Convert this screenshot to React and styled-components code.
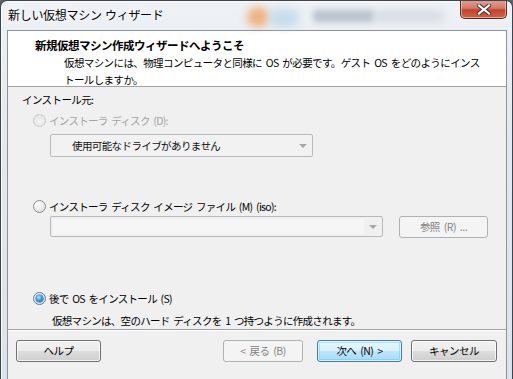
import React, { useState } from 'react';
import styled, { createGlobalStyle, css } from 'styled-components';

const GlobalStyle = createGlobalStyle`
  html, body {
    margin: 0;
    padding: 0;
    background: #5a6470;
  }
  body {
    font-family: "Noto Sans CJK JP", "Noto Sans", sans-serif;
    font-size: 10.5px;
    word-spacing: 2px;
    color: #000;
  }
`;

const Window = styled.div`
  position: relative;
  width: 513px;
  height: 379px;
  box-sizing: border-box;
  display: flex;
  flex-direction: column;
  overflow: hidden;
  border: 1px solid #3e444c;
  border-bottom: none;
  border-radius: 7px 7px 0 0;
  background: linear-gradient(180deg, #eef1f5 0%, #e3e8ee 40%, #dde3ea 100%);
  box-shadow: inset 1px 1px 0 rgba(255, 255, 255, 0.85);
`;

const Blur = styled.span`
  position: absolute;
  top: ${(p) => p.top}px;
  left: ${(p) => p.left}px;
  width: ${(p) => p.w}px;
  height: ${(p) => p.h}px;
  border-radius: ${(p) => p.r || 8}px;
  background: ${(p) => p.color};
  filter: blur(${(p) => p.blur || 3}px);
  opacity: ${(p) => p.op || 0.7};
  pointer-events: none;
`;

const TitleBar = styled.div`
  position: relative;
  height: 29px;
  display: flex;
  align-items: flex-start;
  justify-content: space-between;
  padding-left: 7px;
  flex-shrink: 0;
`;

const Title = styled.div`
  position: relative;
  margin-top: 5px;
  font-size: 12px;
  line-height: 17px;
  word-spacing: 1px;
  color: #000;
  letter-spacing: -0.3px;
  text-shadow: 0 0 6px #fff, 0 0 10px #fff;
`;

const CloseButton = styled.button`
  position: relative;
  width: 47px;
  height: 19px;
  margin: -1px 5px 0 0;
  padding: 0;
  border: 1px solid #5c2a22;
  border-top: none;
  border-radius: 0 0 5px 5px;
  background: linear-gradient(180deg, #e0a196 0%, #d27b6a 45%, #c4422c 55%, #d0624c 100%);
  box-shadow: inset 0 0 0 1px rgba(255, 220, 210, 0.55);
  display: flex;
  align-items: center;
  justify-content: center;
  cursor: pointer;
`;

const Client = styled.div`
  flex: 1;
  margin: 0 5px 0 6px;
  border: 1px solid #8a929b;
  border-bottom: none;
  background: #f0f0f0;
  display: flex;
  flex-direction: column;
`;

const Header = styled.div`
  height: 56px;
  box-sizing: border-box;
  background: #fff;
  border-bottom: 1px solid #a0a0a0;
  padding: 6px 0 0 27px;
  flex-shrink: 0;
`;

const HeaderTitle = styled.div`
  font-weight: bold;
  font-size: 11.5px;
  line-height: 17px;
  letter-spacing: -0.5px;
`;

const HeaderText = styled.div`
  padding-left: 29px;
  line-height: 17px;
  letter-spacing: -0.6px;
`;

const Line = styled.span`
  display: block;
  white-space: nowrap;
`;

const Body = styled.div`
  height: 243px;
  box-sizing: border-box;
  padding: 4px 0 0 14px;
  display: flex;
  flex-direction: column;
  align-items: flex-start;
  border-bottom: 1px solid #a0a0a0;
  flex-shrink: 0;
`;

const Label = styled.div`
  line-height: 17px;
  letter-spacing: -0.6px;
`;

const RadioRow = styled.label`
  display: flex;
  align-items: center;
  gap: 3px;
  margin-top: ${(p) => p.mt}px;
  margin-left: 11px;
  line-height: 17px;
  letter-spacing: -0.7px;
  white-space: pre;
  color: ${(p) => (p.disabled ? '#a3a3a3' : '#000')};
  cursor: default;
`;

const RadioCircle = styled.span`
  position: relative;
  width: 13px;
  height: 13px;
  box-sizing: border-box;
  border-radius: 50%;
  border: 1px solid ${(p) => (p.disabled ? '#c8c8c8' : '#8b8e92')};
  background: ${(p) =>
    p.disabled
      ? 'radial-gradient(circle at 50% 60%, #f4f4f4 0%, #e6e6e6 70%)'
      : 'radial-gradient(circle at 35% 30%, #ffffff 0%, #e9eaeb 55%, #cfd1d3 100%)'};
  flex-shrink: 0;
  ${(p) =>
    p.checked &&
    css`
      border-color: #4f7ca6;
      &::after {
        content: '';
        position: absolute;
        left: 2px;
        top: 2px;
        width: 7px;
        height: 7px;
        border-radius: 50%;
        background: radial-gradient(circle at 40% 35%, #bfe7ff 0%, #3c9de0 45%, #0b5aa6 100%);
        box-shadow: 0 0 0 0.5px #1f4f86;
      }
    `}
`;

const Combo = styled.div`
  width: ${(p) => p.w}px;
  height: ${(p) => p.h}px;
  box-sizing: border-box;
  margin-top: ${(p) => p.mt || 0}px;
  margin-left: ${(p) => p.ml || 0}px;
  border: 1px solid #b7b9bb;
  border-radius: 2px;
  background: ${(p) => (p.edit ? '#f0f0f0' : '#f2f2f2')};
  display: flex;
  align-items: center;
  flex-shrink: 0;
`;

const ComboText = styled.div`
  flex: 1;
  padding-left: 21px;
  line-height: 17px;
  letter-spacing: -0.6px;
  color: #111;
`;

const EditArea = styled.div`
  flex: 1;
  align-self: stretch;
  margin: 2px 0 2px 2px;
  background: #f6f6f6;
`;

const Arrow = styled.div`
  width: 18px;
  display: flex;
  align-items: center;
  justify-content: center;
  align-self: stretch;
  &::after {
    content: '';
    border-left: 4px solid transparent;
    border-right: 4px solid transparent;
    border-top: 4px solid #a8a8a8;
  }
`;

const FileRow = styled.div`
  display: flex;
  align-items: flex-start;
  gap: 16px;
  margin-top: 1px;
  margin-left: 28px;
`;

const Button = styled.button`
  width: ${(p) => p.w || 85}px;
  height: 22px;
  box-sizing: border-box;
  padding: 0;
  font-family: inherit;
  font-size: 10.5px;
  word-spacing: 2px;
  letter-spacing: -0.5px;
  line-height: 16px;
  border-radius: 3px;
  border: 1px solid #707070;
  color: #000;
  background: linear-gradient(180deg, #f2f2f2 0%, #ebebeb 49%, #dddddd 50%, #cfcfcf 100%);
  box-shadow: inset 0 0 0 1px rgba(255, 255, 255, 0.75);
  cursor: default;
  flex-shrink: 0;
  ${(p) =>
    p.primary &&
    css`
      border-color: #3c7fb1;
      background: linear-gradient(180deg, #eaf6fd 0%, #d9f0fc 49%, #bee6fd 50%, #a7d9f5 100%);
      box-shadow: inset 0 0 0 1px rgba(255, 255, 255, 0.7), inset 0 0 0 2px rgba(100, 200, 245, 0.45);
    `}
  ${(p) =>
    p.disabled &&
    css`
      border-color: #adb2b5;
      background: #f4f4f4;
      color: #838383;
      box-shadow: none;
    `}
`;

const ButtonBar = styled.div`
  display: flex;
  align-items: flex-start;
  padding: 9px 0 0 8px;
  border-top: 1px solid #fff;
`;

const Spacer = styled.div`
  flex: 1;
`;

const Gap = styled.div`
  width: ${(p) => p.w}px;
  flex-shrink: 0;
`;

const Description = styled.div`
  margin-top: 5px;
  margin-left: 30px;
  line-height: 17px;
  letter-spacing: -0.7px;
`;

export default function App() {
  const [choice, setChoice] = useState('later');

  return (
    <>
      <GlobalStyle />
      <Window>
        <Blur top={6} left={246} w={22} h={20} r={10} color="#f0a060" blur={4} op={0.8} />
        <Blur top={8} left={268} w={30} h={18} r={8} color="#b9d6ea" blur={4} op={0.75} />
        <Blur top={9} left={312} w={60} h={12} r={3} color="#8793a8" blur={3} op={0.5} />
        <Blur top={10} left={372} w={70} h={10} r={3} color="#aab3c2" blur={4} op={0.35} />
        <TitleBar>
          <Title>新しい仮想マシン ウィザード</Title>
          <CloseButton aria-label="閉じる">
            <svg width="14" height="11" viewBox="0 0 14 11">
              <path
                d="M2 1.5 L12 9.5 M12 1.5 L2 9.5"
                stroke="#3d2a28"
                strokeWidth="4"
                strokeLinecap="square"
              />
              <path
                d="M2 1.5 L12 9.5 M12 1.5 L2 9.5"
                stroke="#ffffff"
                strokeWidth="2.2"
                strokeLinecap="square"
              />
            </svg>
          </CloseButton>
        </TitleBar>
        <Client>
          <Header>
            <HeaderTitle>新規仮想マシン作成ウィザードへようこそ</HeaderTitle>
            <HeaderText>
              <Line>仮想マシンには、物理コンピュータと同様に OS が必要です。ゲスト OS をどのようにインス</Line>
              <Line>トールしますか。</Line>
            </HeaderText>
          </Header>
          <Body>
            <Label>インストール元:</Label>
            <RadioRow mt={4} disabled>
              <RadioCircle disabled />
              インストーラ ディスク (D):
            </RadioRow>
            <Combo w={263} h={23} mt={5} ml={28}>
              <ComboText>使用可能なドライブがありません</ComboText>
              <Arrow />
            </Combo>
            <RadioRow mt={41} onClick={() => setChoice('iso')}>
              <RadioCircle checked={choice === 'iso'} />
              インストーラ ディスク イメージ ファイル (M) (iso):
            </RadioRow>
            <FileRow>
              <Combo w={333} h={21} edit>
                <EditArea />
                <Arrow />
              </Combo>
              <Button w={89} disabled>
                参照 (R) ...
              </Button>
            </FileRow>
            <RadioRow mt={52} onClick={() => setChoice('later')}>
              <RadioCircle checked={choice === 'later'} />
              後で OS をインストール (S)
            </RadioRow>
            <Description>仮想マシンは、空のハード ディスクを 1 つ持つように作成されます。</Description>
          </Body>
          <ButtonBar>
            <Button>ヘルプ</Button>
            <Spacer />
            <Button w={80} disabled>
              &lt; 戻る (B)
            </Button>
            <Gap w={14} />
            <Button primary w={85}>
              次へ (N) &gt;
            </Button>
            <Gap w={9} />
            <Button w={86}>キャンセル</Button>
            <Gap w={9} />
          </ButtonBar>
        </Client>
      </Window>
    </>
  );
}
